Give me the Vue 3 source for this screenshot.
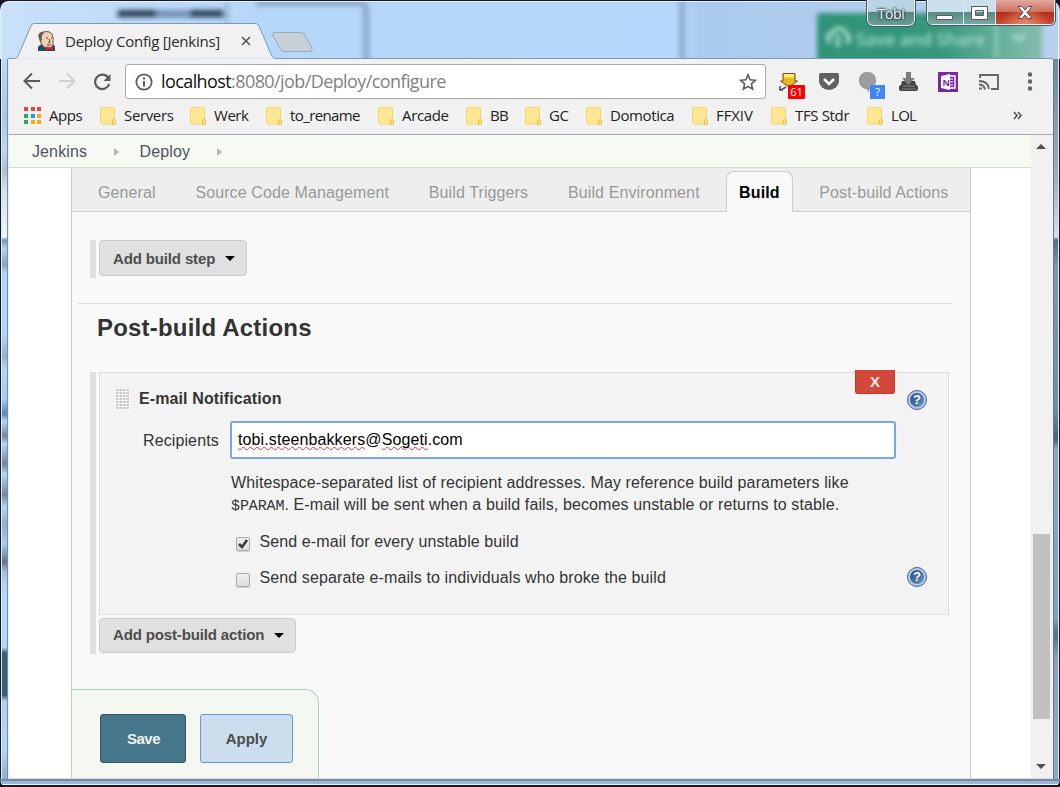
<script setup>
import { ref } from 'vue'

const bookmarks = [
  { name: 'Servers', width: 90, spacing: -0.35 },
  { name: 'Werk', width: 76, spacing: -0.45 },
  { name: 'to_rename', width: 112, spacing: -0.6 },
  { name: 'Arcade', width: 88, spacing: -0.35 },
  { name: 'BB', width: 59, spacing: -0.8 },
  { name: 'GC', width: 61, spacing: -0.5 },
  { name: 'Domotica', width: 106, spacing: -0.4 },
  { name: 'FFXIV', width: 79, spacing: -0.1 },
  { name: 'TFS Stdr', width: 96, spacing: -0.35 },
  { name: 'LOL', width: 60, spacing: -0.7 }
]
const appColors = ['#f44336', '#f44336', '#f44336', '#34a85a', '#2196f3', '#ffa60a', '#34a85a', '#ffa60a', '#ffa60a']
const tabs = ['General', 'Source Code Management', 'Build Triggers', 'Build Environment', 'Build', 'Post-build Actions']
const activeTab = ref('Build')
const unstable = ref(true)
const individuals = ref(false)
</script>

<template>
  <div class="window">
    <header class="titlebar">
      <svg class="glass" width="1060" height="59" viewBox="0 0 1060 59">
        <defs>
          <linearGradient id="sky" x1="0" x2="1" y1="0" y2="0">
            <stop offset="0" stop-color="#c9e0f8" /><stop offset=".1" stop-color="#c2dcf8" /><stop offset=".25" stop-color="#b5d7f8" />
            <stop offset=".64" stop-color="#b4d7fb" /><stop offset=".66" stop-color="#aacbee" /><stop offset="1" stop-color="#b7d0ee" />
          </linearGradient>
          <linearGradient id="green" x1="0" x2="1" y1="0" y2="0">
            <stop offset="0" stop-color="#2f9377" /><stop offset=".55" stop-color="#35967b" /><stop offset=".85" stop-color="#6db29e" /><stop offset="1" stop-color="#83bcae" />
          </linearGradient>
          <filter id="b2" filterUnits="userSpaceOnUse" x="0" y="-20" width="1060" height="100"><feGaussianBlur stdDeviation="2.4" /></filter>
        </defs>
        <rect width="1060" height="59" fill="url(#sky)" />
        <g filter="url(#b2)">
          <rect x="117" y="10" width="108" height="8" fill="#7393b6" />
          <rect x="118" y="10" width="38" height="7" fill="#2c4056" />
          <rect x="190" y="10" width="33" height="7" fill="#2c4056" />
          <path d="M227 0v59" stroke="#96b2d2" stroke-width="3" />
          <path d="M256 3H363Q366 4 366 12V80" fill="none" stroke="#8ba7c6" stroke-width="6" />
          <path d="M682 -15v100" stroke="#8aabcd" stroke-width="6" />
          <rect x="817" y="13" width="225" height="70" rx="3" fill="url(#green)" />
        </g>
        <g filter="url(#b2)" fill="none" stroke="#a5dccb" stroke-width="4">
          <path d="M831 42c-5-2-4-9 2-9 3-7 12-5 13 1 5 2 4 8-1 8M838 35v12" />
          <path d="M1013 35l6 5 6-5" />
          <path d="M996 18v40" stroke-width="2" />
          <text x="856" y="46" class="behind" textLength="129">Save and Share</text>
        </g>
        <path d="M8 58.5H14c4 0 4-2 6-7L31 26q1-2.500 3-2.500H255q3 0 4 2.500L270 52c2 5 3 6.500 7 6.500H1053" fill="#f1f1f1" stroke="#7c9ab8" />
        <path d="M274 32.500H301q3 0 4 3l7 13q1 3-2 3H284q-3 0-4-3l-7-13q-1-3 1-3Z" fill="#c8d0d8" stroke="#96a9bd" />
        <path d="M1 59V8Q1 1.500 8 1.500H1052Q1058.500 1.500 1058.500 8V59" fill="none" stroke="#edf6ff" opacity=".85" />
        <path d="M0 0H1060V10Q1059 1 1050 1H9Q1 1 0 10Z" fill="#151723" />
      </svg>
      <div class="tab">
        <svg width="20" height="21" viewBox="0 0 20 21">
          <path d="M1 20v-4q2-3 6-3h7q4 0 4 4v3Z" fill="#234b5f" />
          <path d="M3 9Q0 2 6 1q9-2 10 5v8q-2 4-7 3-4-2-5-5Z" fill="#f2d1b0" stroke="#675849" stroke-width="1" />
          <path d="M3 10Q-1 1 6 1l1 1q-3 2-2 6l-1 3Z" fill="#655b52" />
          <path d="M9 7h2m3 0h1M12 8l1 3-2 1m-1 2q2 1 4-1" fill="none" stroke="#594332" />
          <path d="M9 19.500v-4l3.500 1 3.500-1.500v4.500l-3.500-1.500Z" fill="#e61c26" />
        </svg>
        <span class="title">Deploy Config [Jenkins]</span>
        <svg class="close" width="12" height="12" viewBox="0 0 12 12"><path d="M2 2l8 8M10 2L2 10" stroke="#555" stroke-width="1.600" /></svg>
      </div>
      <div class="profile">Tobi</div>
      <div class="controls">
        <span class="ctl min"><svg width="20" height="16"><rect x="1.500" y="9.500" width="16" height="4" rx=".5" fill="#fff" stroke="#525b66" /></svg></span>
        <span class="ctl max"><svg width="19" height="16"><path fill-rule="evenodd" d="M1.500 1.500h16v13h-16ZM5.500 5.500v5h8v-5Z" fill="#fff" stroke="#525b66" /></svg></span>
        <span class="ctl quit"><svg width="18" height="16"><path d="M2 1.500h4l3 3.500 3-3.500h4l-5 6 5 6h-4l-3-3.500-3 3.500H2l5-6Z" fill="#fff" stroke="#5b4b50" /></svg></span>
      </div>
    </header>

    <div class="edge left"></div>
    <div class="client">
      <div class="toolbar">
        <svg class="back" width="18" height="18" viewBox="0 0 18 18"><path d="M17 9H2M9 1.500L1.500 9 9 16.500" fill="none" stroke="#5a5a5a" stroke-width="2" /></svg>
        <svg class="forward" width="18" height="18" viewBox="0 0 18 18"><path d="M1 9h15M9 1.500L16.500 9 9 16.500" fill="none" stroke="#d0d0d0" stroke-width="2" /></svg>
        <svg class="reload" width="18" height="18" viewBox="0 0 18 18"><path d="M15 4.500A7.200 7.200 0 1 0 16.200 11" fill="none" stroke="#5a5a5a" stroke-width="2.200" /><path d="M17.500 1v7h-7Z" fill="#5a5a5a" /></svg>
        <div class="omnibox">
          <svg width="18" height="18" viewBox="0 0 18 18"><circle cx="9" cy="9" r="7.700" fill="none" stroke="#5a5a5a" stroke-width="1.700" /><path d="M9 8v5.500M9 4.500v2" stroke="#5a5a5a" stroke-width="2" /></svg>
          <span class="url"><b>localhost</b>:8080/job/Deploy/configure</span>
          <svg class="star" width="18" height="18" viewBox="0 0 18 18"><path d="M9 1.800l2.100 5 5.400.5-4.100 3.600 1.200 5.300L9 13.400l-4.600 2.800 1.200-5.300L1.500 7.300l5.400-.5Z" fill="none" stroke="#5a5a5a" stroke-width="1.600" /></svg>
        </div>
        <div class="extensions">
          <svg width="28" height="28" viewBox="0 0 28 28">
            <path d="M1 14v4h3M2 18l5-3" fill="none" stroke="#555" stroke-width="1.600" />
            <path d="M4 1.500h12v7.500h2.500l-8.500 6-8.500-6H4Z" fill="#ecb81c" stroke="#69551a" /><path d="M5 2h10v3.500H5Z" fill="#ffed79" />
            <rect x="9" y="13" width="17" height="14" fill="#f00" rx="1" /><text x="17.500" y="24" class="badge">61</text>
          </svg>
          <svg width="22" height="28" viewBox="0 0 22 28"><path d="M2.500 1h17q1.500 0 1.500 2v6a10 9 0 0 1-20 0V3q0-2 1.500-2Z" fill="#616161" /><path d="M6 7l5 5 5-5" fill="none" stroke="#fff" stroke-width="2.600" /></svg>
          <svg width="28" height="28" viewBox="0 0 28 28"><circle cx="9.500" cy="8.500" r="8.700" fill="#9c9c9c" /><path d="M7 16l4 4 1-5Z" fill="#9c9c9c" /><rect x="12" y="13" width="15" height="14" fill="#4285f4" /><text x="19.500" y="24" class="badge">?</text></svg>
          <svg width="22" height="28" viewBox="0 0 22 28"><path d="M4 9h13l1 4q2 0 2 2v2q0 2-2 2H3q-2 0-2-2v-2q0-2 2-2Z" fill="#454545" /><path d="M5 14h12M4 17h14" stroke="#858585" /><path d="M8 0h5v6h4l-6.500 7L4 6h4Z" fill="#7c7c7c" /></svg>
          <svg width="20" height="28" viewBox="0 0 20 28"><path d="M0 0h20v20H0Z" fill="#7928a1" /><path d="M11 4h6v12h-6" fill="none" stroke="#fff" stroke-width="1.400" /><path d="M11 7h4m-4 3h4m-4 3h4" stroke="#fff" /><path d="M3 4l9-2v16l-9-2Z" fill="#fff" /><text x="4.500" y="13.500" class="note">N</text></svg>
          <svg width="22" height="28" viewBox="0 0 22 28"><path d="M2 6V3h18v14h-7M1 16.500h3m-3-4q5 0 6 5M1 9q9 0 10 8" fill="none" stroke="#666" stroke-width="1.900" /></svg>
          <svg width="6" height="28" viewBox="0 0 6 28"><path d="M3 2.500h.01M3 9.500h.01M3 16.500h.01" stroke="#666" stroke-width="4.500" stroke-linecap="round" /></svg>
        </div>
      </div>

      <nav class="bookmarks">
        <div class="apps"><span class="dots"><i v-for="(c, i) in appColors" :key="i" :style="{ background: c }"></i></span><span class="name">Apps</span></div>
        <div v-for="b in bookmarks" :key="b.name" class="bookmark" :style="{ width: b.width + 'px', letterSpacing: b.spacing + 'px' }">
          <svg width="17" height="20" viewBox="0 0 17 20"><path d="M1.500 1.500h12q1 0 1 1v15.500h-13q-1 0-1-1V2.500q0-1 1-1Z" fill="#ffe694" stroke="#f6d869" /><path d="M12.500 18.500v-4q2-3 3 0v3q0 1-1 1Z" fill="#fddd72" stroke="#eebd45" /></svg>
          <span class="name">{{ b.name }}</span>
        </div>
        <svg class="more" width="9" height="9" viewBox="0 0 9 9"><path d="M1 1l3 3.500L1 8m4-7l3 3.500L5 8" fill="none" stroke="#555" stroke-width="1.600" /></svg>
      </nav>

      <div class="viewport">
        <main class="page">
          <div class="crumbs"><span>Jenkins</span><i></i><span>Deploy</span><i></i></div>
          <div class="config">
            <div class="tabs">
              <span v-for="t in tabs" :key="t" :class="{ active: t === activeTab }">{{ t }}</span>
            </div>
            <div class="group first"><button class="add">Add build step<i></i></button></div>
            <hr />
            <h2>Post-build Actions</h2>
            <div class="group second">
              <section class="notification">
                <button class="remove">X</button>
                <div class="heading">
                  <svg width="15" height="22" viewBox="0 0 15 22"><rect width="15" height="22" fill="#fafafa" /><path v-for="n in 7" :key="n" :d="`M1 ${n * 3 - 1}h13`" stroke="#b4b4b4" stroke-width="1.400" stroke-dasharray="2.500 1" /></svg>
                  <strong>E-mail Notification</strong>
                  <span class="help"><b>?</b></span>
                </div>
                <div class="recipients"><label>Recipients</label>
                  <div class="input"><span class="typo">tobi.steenbakkers</span>@<span class="typo">Sogeti</span>.com</div>
                </div>
                <p>Whitespace-separated list of recipient addresses. May reference build parameters like<br /><code>$PARAM</code>. E-mail will be sent when a build fails, becomes unstable or returns to stable.</p>
                <div class="check"><span class="box"><svg v-if="unstable" width="12" height="12" viewBox="0 0 12 12"><path d="M2 6l3 3 5-7" fill="none" stroke="#3a3a3a" stroke-width="2.600" /></svg></span><span>Send e-mail for every unstable build</span></div>
                <div class="check two"><span class="box"><svg v-if="individuals" width="12" height="12"></svg></span><span>Send separate e-mails to individuals who broke the build</span><span class="help"><b>?</b></span></div>
              </section>
              <button class="add post">Add post-build action<i></i></button>
            </div>
            <div class="sticky"><button class="save">Save</button><button class="apply">Apply</button></div>
          </div>
        </main>
        <div class="scrollbar"><i class="up"></i><div class="thumb"></div><i class="down"></i></div>
      </div>
    </div>
    <div class="edge right"></div>
    <div class="bottom"></div>
  </div>
</template>

<style>
html, body { margin: 0; overflow: hidden; background: #151723; }
</style>

<style scoped>
* { box-sizing: border-box; }
.window { width: 1060px; height: 787px; display: grid; grid-template: 59px 720px 8px / 9px 1044px 7px; overflow: hidden; font-family: "Liberation Sans", Arial, sans-serif; background: #151723; border-radius: 0 0 7px 7px; }
svg { display: block; flex: none; }
button { font: inherit; margin: 0; padding: 0; }
.titlebar { grid-column: 1 / 4; position: relative; display: flex; align-items: flex-start; font-family: "Open Sans", "Noto Sans", sans-serif; }
.glass { position: absolute; left: 0; top: 0; }
.behind { font: 600 18px "Open Sans", sans-serif; fill: #a5dccb; stroke: none; }
.tab { position: relative; display: flex; align-items: center; width: 236px; margin: 26px 0 0 37px; height: 30px; }
.title { margin-left: 8px; width: 176px; font-size: 15px; letter-spacing: -.25px; white-space: nowrap; color: #2a2a2a; }
.close { margin-left: -1px; }
.profile { position: relative; margin-left: 594px; width: 48px; height: 26px; border: 1px solid #e7f1f3; border-top: 0; border-radius: 0 0 6px 6px; outline: 1px solid #435863; background: linear-gradient(#b9d5e3 0 45%, #548980 50%, #6b9b94); color: #fff; font: 14px/27px "Open Sans", sans-serif; letter-spacing: -.3px; text-align: center; text-shadow: 0 0 2px #213944, 0 0 2px #213944, 0 0 3px #213944; }
.controls { position: relative; margin-left: 12px; display: flex; width: 128px; height: 25px; border: 1px solid #e8f2f5; border-top: 0; border-radius: 0 0 5px 5px; outline: 1px solid #435863; overflow: hidden; }
.ctl { display: flex; align-items: center; justify-content: center; padding-top: 3px; background: linear-gradient(#cbdfec 0 48%, #568a84 52%, #79aaa2); border-right: 1px solid #d9e8ed; }
.min { width: 36px; } .max { width: 33px; padding-top: 2px; }
.quit { width: 58px; border: 0; padding-top: 2px; background: radial-gradient(ellipse at 50% 115%, #ef9272, transparent 60%), linear-gradient(#e3a99e, #cb6f60 48%, #b42c17 52%, #c94b34); }
.left { background: linear-gradient(90deg, #151723 0 1px, #d9eaf8 1px 2px, transparent 2px 7px, #738da9 7px 8px, #dcecf8 8px), linear-gradient(#bbd8f7 0, #a9c7e8 60px, #c1d7ed 90px, #aebfd2 112px, #d7dfea 130px, #f0f3f9 178px, #7895b4 181px, #afd3f7 190px, #89a5c2 206px, #b2d6fa 214px, #b2d6fa 275px, #91b1d2 297px, #b2d6fa 310px, #a5cbf2 340px, #5685b9 355px, #b2d6fa 362px, #72859e 377px, #b2d6fa 385px, #72859e 405px, #b2d6fa 415px, #72859e 436px, #b2d6fa 448px, #91adc9 465px, #a8ccf1 485px, #65738a 503px, #a3c1e1 513px, #b3d7fb 530px, #b3d7fb 588px, #356076 594px, #356076 636px, #aecfef 642px, #b2d6fa 690px, #91afd0 720px); }
.right { background: linear-gradient(90deg, #657990 0 1px, transparent 1px 5px, #d9e9f5 5px 6px, #171925 6px), linear-gradient(#77879a 0, #a0adbd 120px, #d6dfe9 178px, #586d87 181px, #8198b1 210px, #738da9 350px, #4c6178 380px, #8ea6c2 390px, #849fbd 560px, #536e90 575px, #8f9fc2 600px, #90a9c6 720px); }
.bottom { grid-column: 1 / 4; background: linear-gradient(#6e8aa6 0 2px, #9bb7d5 2px 5px, #e8f4ff 5px 6px, #171925 6px); border-radius: 0 0 7px 7px; }
.client { display: grid; grid-template-rows: 43px 32px 1fr; height: 720px; min-width: 0; background: #f1f1f1; border-bottom: 1px solid #ddd; }
.toolbar { display: flex; padding-top: 5px; }
.back { margin: 8px 0 0 14px; } .forward { margin: 8px 0 0 17px; } .reload { margin: 9px 0 0 17px; }
.omnibox { width: 641px; height: 35px; margin-left: 14px; border: 1px solid #a9a9a9; border-radius: 3px; background: #fff; display: flex; align-items: center; padding: 0 9px; font-family: "Open Sans", "Noto Sans", sans-serif; }
.url { margin-left: 8px; margin-top: -1px; font-size: 18px; letter-spacing: -.59px; color: #818181; white-space: nowrap; }
.url b { font-weight: 400; color: #111; }
.star { margin-left: auto; margin-right: -1px; }
.extensions { display: grid; grid-template-columns: 39px 40px 40px 40px 40px 49px 6px; margin: 8px 0 0 13px; }
.badge { font: 11px "Open Sans", sans-serif; fill: #fff; text-anchor: middle; }
.note { font: bold 9px "Open Sans", sans-serif; fill: #7928a1; }
.bookmarks { display: flex; align-items: center; padding: 0 0 5px 15px; font: 15px "Open Sans", "Noto Sans", sans-serif; letter-spacing: -.45px; color: #222; }
.apps { display: flex; align-items: center; width: 76px; gap: 8px; }
.dots { display: grid; grid-template-columns: repeat(3, 4px); gap: 2.500px; }
.dots i { width: 4px; height: 4px; }
.bookmark { display: flex; align-items: center; gap: 7px; white-space: nowrap; }
.name { padding-bottom: 2px; }
.more { margin-left: 86px; }
.viewport { display: grid; grid-template-columns: 1022px 22px; border-top: 1px solid #a9a9a9; height: 644px; overflow: hidden; }
.page { height: 643px; background: #fff; display: grid; grid-template-rows: 33px 610px; font-size: 16px; line-height: 22px; letter-spacing: .11px; color: #333; }
.crumbs { border-bottom: 1px solid #d2d9cf; background: #f6faf2; display: flex; align-items: center; padding: 2px 0 0 23px; color: #4d545d; }
.crumbs i { border: solid transparent; border-width: 4.500px 0 4.500px 5px; border-left-color: #bfb9b7; margin: 0 20.500px 0 27px; }
.config { width: 900px; margin-left: 62px; border: solid #ccc; border-width: 0 1px; background: #f9f9f9; display: flex; flex-direction: column; align-items: flex-start; }
.tabs { width: 898px; height: 44px; background: #eee; border-bottom: 1px solid #ccc; display: flex; color: #999; padding-left: 6px; white-space: nowrap; }
.tabs span { padding: 14px 19.900px 0; height: 43px; }
.tabs .active { color: #000; font-weight: 700; background: #f9f9f9; border: 1px solid #ccc; border-bottom: 0; border-radius: 8px 8px 0 0; margin: 3px 6.500px 0; padding: 10px 12.300px 0 12px; height: 41px; }
.group { margin-left: 18px; border-left: 6px solid #e0e0e0; padding-left: 3px; }
.first { margin-top: 28px; height: 38px; }
.add { display: flex; align-items: center; width: 148px; height: 36px; padding-left: 13px; padding-top: 1px; font-size: 15px; letter-spacing: -.14px; font-weight: 700; color: #4d4d4d; background: #e0e0e0; border: 1px solid #ccc; border-radius: 4px; white-space: nowrap; }
.add i { border: solid transparent; border-width: 5px 5px 0; border-top-color: #000; margin-left: 10px; }
hr { width: 873px; height: 1px; border: 0; background: #ddd; margin: 25px 0 0 6px; }
h2 { margin: 10px 0 0 25px; font-size: 24px; line-height: 28px; letter-spacing: .2px; color: #333; }
.second { margin-top: 30px; height: 283px; }
.notification { position: relative; width: 850px; height: 243px; border: 1px solid #ddd; background: #f3f3f3; margin-bottom: 3px; }
.remove { position: absolute; left: 755px; top: -3px; width: 40px; height: 24px; border: 1px solid #c0392b; border-top-color: #d24939; border-radius: 0 0 3px 3px; background: #d24939; color: #f5eded; font: bold 15px "Liberation Sans", sans-serif; }
.heading { display: flex; align-items: center; padding: 16px 21px 0 15px; height: 36px; }
.heading strong { margin-left: 9px; }
.help { margin-left: auto; width: 20px; height: 20px; border: 1px solid #415f91; border-radius: 50%; background: #b9cce2; padding: 2px; display: block; }
.help b { display: block; width: 14px; height: 14px; border-radius: 50%; background: linear-gradient(135deg, #244a8c, #6894c8); color: #fff; text-align: center; letter-spacing: 0; font: bold 13px/14px "Liberation Sans", sans-serif; }
.heading .help { transform: translateY(1px); }
.two .help { transform: translateY(-1px); }
.recipients { display: flex; align-items: center; height: 38px; margin-top: 12px; padding-left: 43px; }
.recipients label { width: 87px; padding-top: 2px; }
.input { width: 666px; height: 38px; border: 2px solid #79a5ec; border-radius: 3px; background: #fff; color: #000; padding: 6px 6px; white-space: nowrap; }
.typo { text-decoration: underline wavy #e33 1px; text-underline-offset: 1px; text-decoration-skip-ink: none; }
p { margin: 13px 0 0 131px; white-space: nowrap; }
code { font: 15px/15px "Liberation Mono", monospace; letter-spacing: -.1px; }
.check { display: flex; align-items: center; height: 22px; margin: 15px 21px 0 136px; }
.two { margin-top: 14px; }
.box { width: 14px; height: 14px; border: 1px solid #aaa; border-radius: 2px; background: linear-gradient(#eee, #ddd); box-shadow: 0 1px 1px #ccc; margin: 4px 9.500px 0 0; }
.post { width: 197px; height: 35px; padding-top: 0; }
.sticky { margin-top: 35px; width: 247px; height: 89px; border: 1px solid #acd1bb; border-width: 1px 1px 0 0; border-radius: 0 14px 0 0; background: #f4f8f1; display: flex; gap: 14px; padding: 24px 0 0 28px; }
.save, .apply { height: 49px; border-radius: 3px; font-size: 15px; font-weight: 700; letter-spacing: 0; }
.save { width: 86px; border: 1px solid #315969; background: #45768a; color: #f1f1f1; letter-spacing: -.5px; padding-left: 1px; }
.apply { width: 93px; border: 1px solid #6699d4; background: #ccdded; color: #4b4b4b; }
.scrollbar { background: #f1f1f1; display: flex; flex-direction: column; align-items: center; padding: 9px 3px 9px 2px; height: 643px; }
.up { border: solid transparent; border-width: 0 5px 5px; border-bottom-color: #505050; margin-left: -1px; }
.down { border: solid transparent; border-width: 5px 5px 0; border-top-color: #505050; margin-left: -1px; margin-top: auto; }
.thumb { width: 17px; height: 185px; margin-top: 385px; background: #c1c1c1; }
</style>
